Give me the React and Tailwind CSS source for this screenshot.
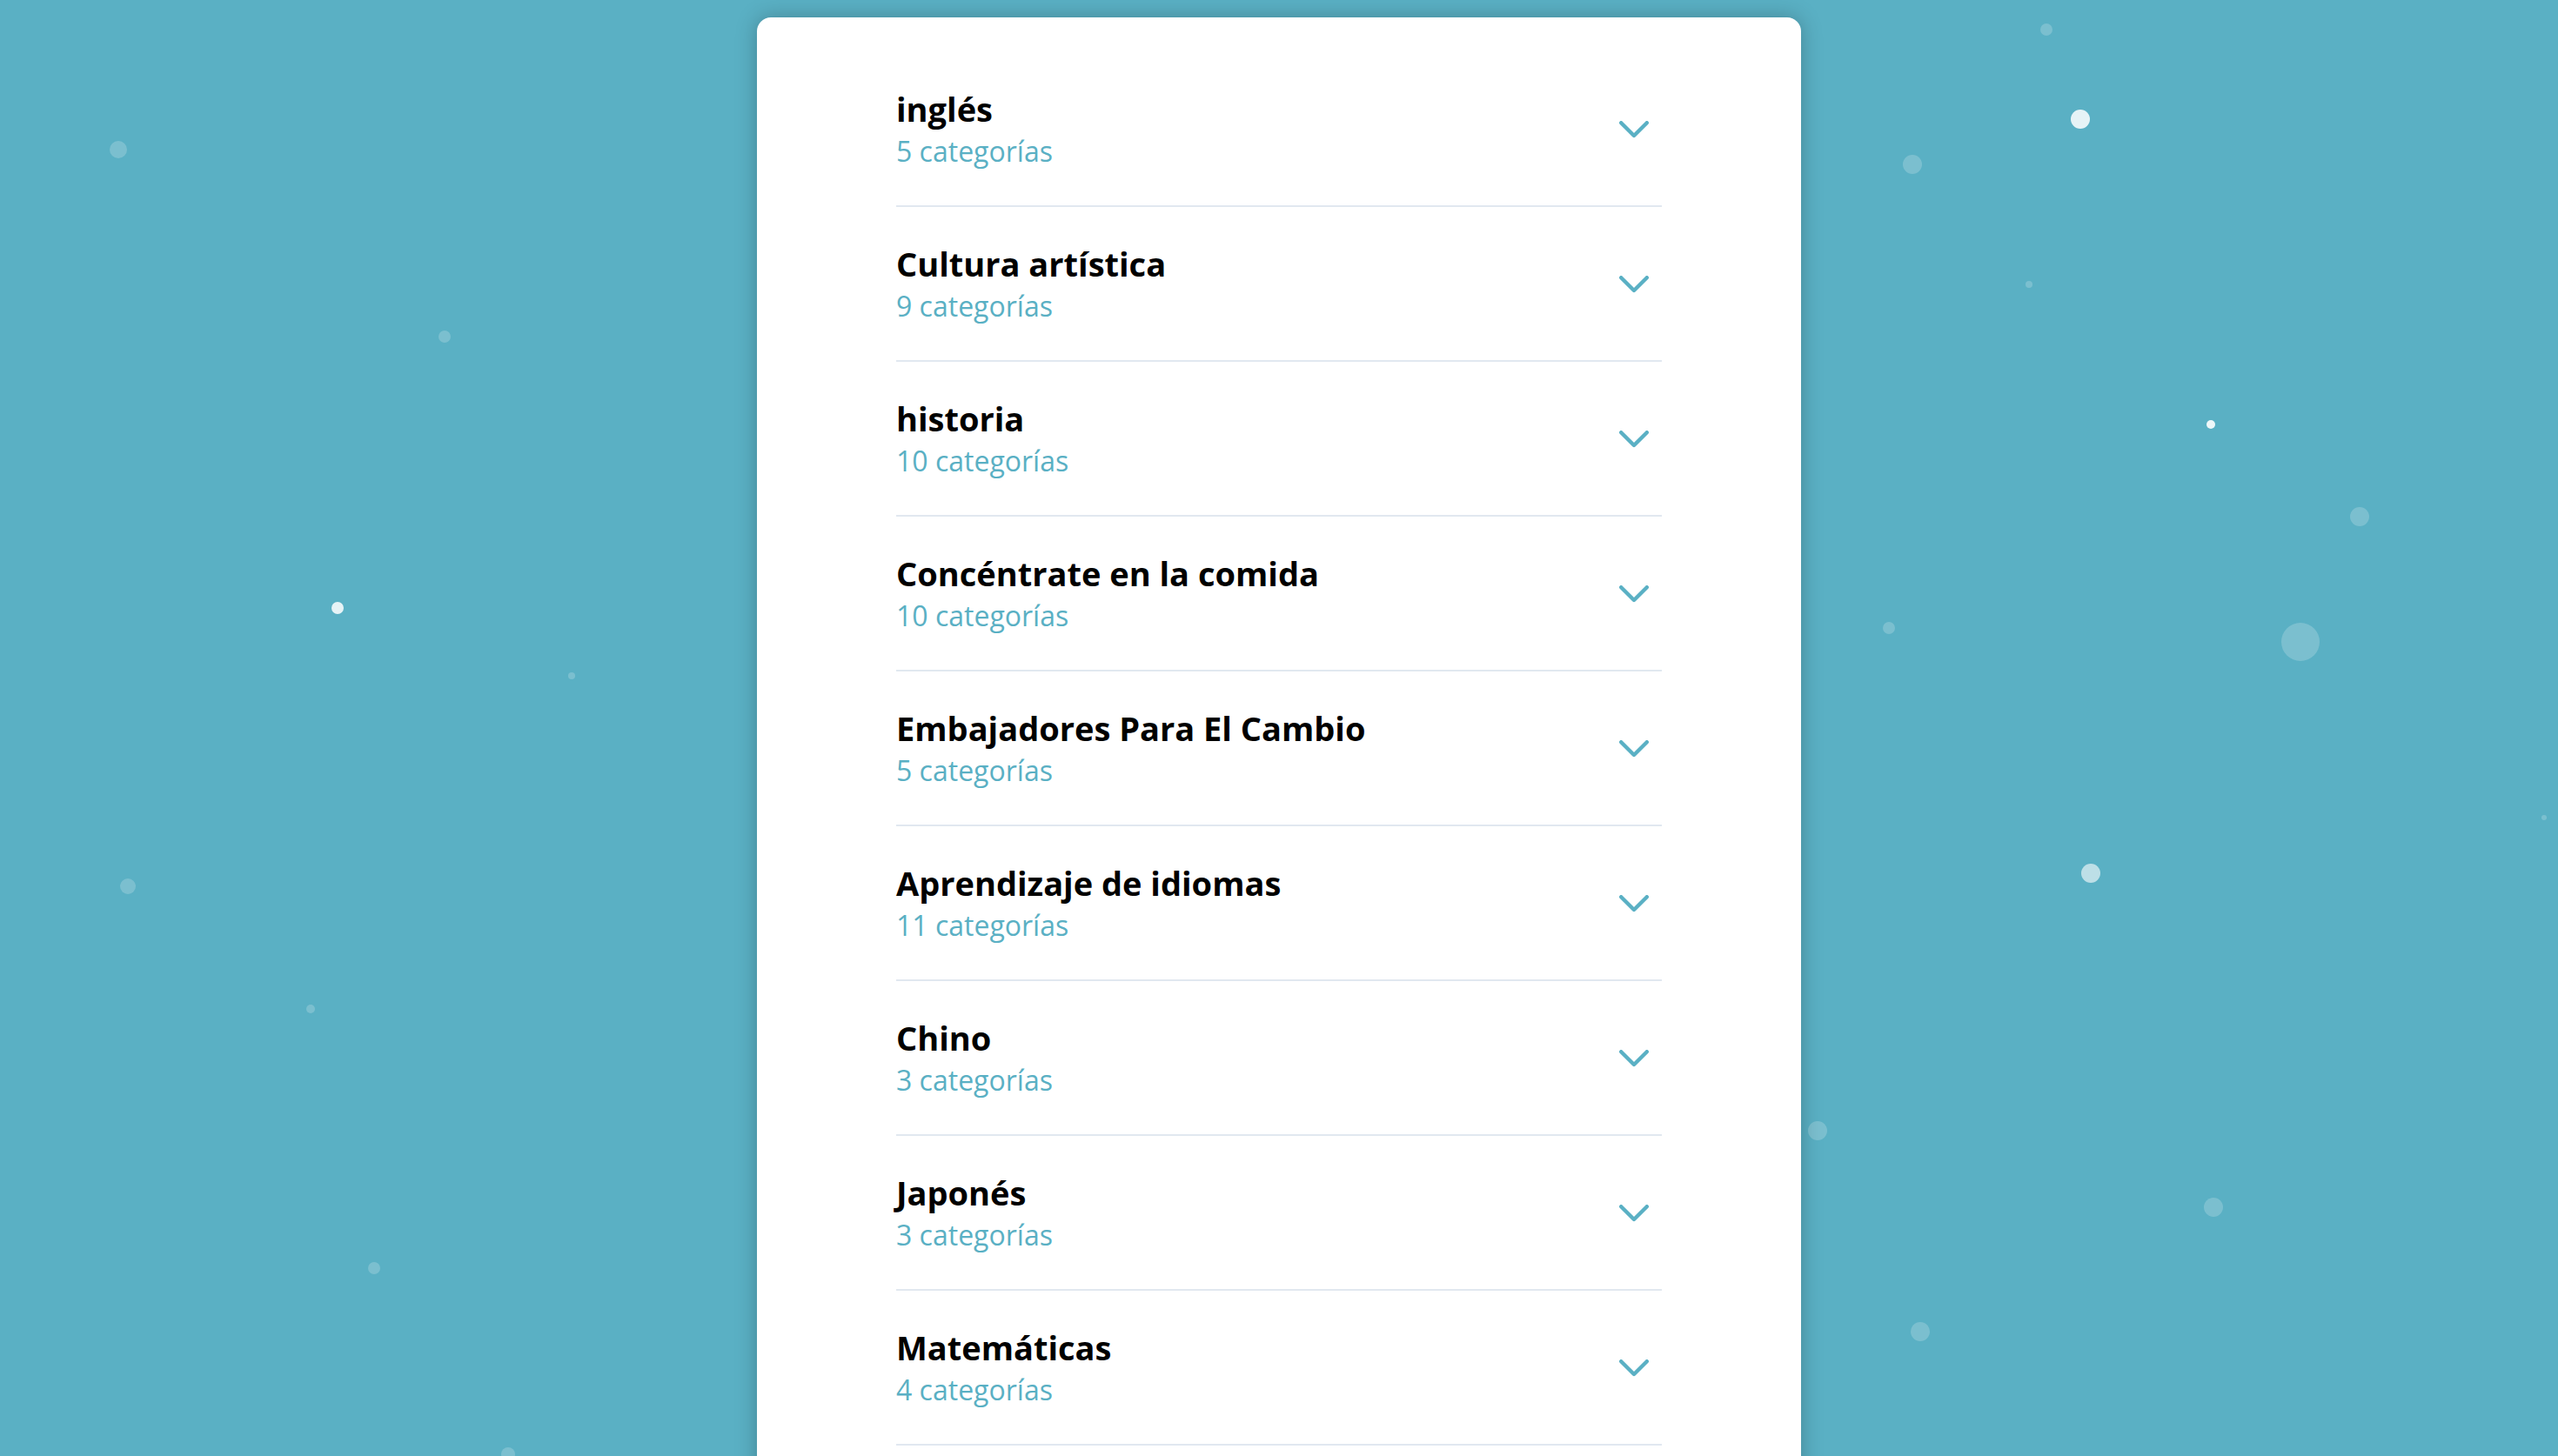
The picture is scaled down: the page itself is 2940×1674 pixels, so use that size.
const subjects = [
  { name: 'inglés', count: '5 categorías' },
  { name: 'Cultura artística', count: '9 categorías' },
  { name: 'historia', count: '10 categorías' },
  { name: 'Concéntrate en la comida', count: '10 categorías' },
  { name: 'Embajadores Para El Cambio', count: '5 categorías' },
  { name: 'Aprendizaje de idiomas', count: '11 categorías' },
  { name: 'Chino', count: '3 categorías' },
  { name: 'Japonés', count: '3 categorías' },
  { name: 'Matemáticas', count: '4 categorías' },
];

// floating bubbles behind the card
const bubbles = [
  'left-[126px] top-[162px] w-[20px] h-[20px] bg-white/20',
  'left-[504px] top-[380px] w-[14px] h-[14px] bg-white/20',
  'left-[381px] top-[692px] w-[14px] h-[14px] bg-white/85',
  'left-[653px] top-[773px] w-[8px] h-[8px] bg-white/20',
  'left-[138px] top-[1010px] w-[18px] h-[18px] bg-white/20',
  'left-[352px] top-[1155px] w-[10px] h-[10px] bg-white/20',
  'left-[423px] top-[1451px] w-[14px] h-[14px] bg-white/20',
  'left-[576px] top-[1664px] w-[16px] h-[16px] bg-white/20',
  'left-[2345px] top-[27px] w-[14px] h-[14px] bg-white/20',
  'left-[2380px] top-[126px] w-[22px] h-[22px] bg-white/85',
  'left-[2187px] top-[178px] w-[22px] h-[22px] bg-white/20',
  'left-[2328px] top-[323px] w-[8px] h-[8px] bg-white/20',
  'left-[2536px] top-[483px] w-[10px] h-[10px] bg-white/90',
  'left-[2701px] top-[583px] w-[22px] h-[22px] bg-white/20',
  'left-[2164px] top-[715px] w-[14px] h-[14px] bg-white/20',
  'left-[2622px] top-[716px] w-[44px] h-[44px] bg-white/20',
  'left-[2392px] top-[993px] w-[22px] h-[22px] bg-white/60',
  'left-[2921px] top-[937px] w-[6px] h-[6px] bg-white/20',
  'left-[2078px] top-[1289px] w-[22px] h-[22px] bg-white/20',
  'left-[2533px] top-[1377px] w-[22px] h-[22px] bg-white/20',
  'left-[2196px] top-[1520px] w-[22px] h-[22px] bg-white/20',
];

const Chevron = () => (
  <svg width="34" height="20" viewBox="0 0 34 20" fill="none">
    <polyline points="2.2,2.2 17,17 31.8,2.2" stroke="#5ab0c4" strokeWidth="4.4" strokeLinecap="round" strokeLinejoin="round" />
  </svg>
);

const App = () => {
  return (
    <div className="relative h-screen overflow-hidden bg-[#5ab0c4]" style={{ fontFamily: '"Open Sans", "Noto Sans", sans-serif' }}>
      {bubbles.map((b, i) => (
        <div key={i} className={`absolute rounded-full ${b}`} />
      ))}

      <div className="relative mx-auto mt-[20px] min-h-[1800px] w-[1200px] rounded-2xl bg-white px-[160px] pt-[40px] shadow-[0_0_24px_rgba(0,0,0,0.25)]">
        {subjects.map((s) => (
          <div key={s.name} className="flex items-center justify-between border-b-2 border-[#e1e8f0] pt-[40px] pb-[38px]">
            <div>
              <p className="text-[38px] leading-[50px] font-bold text-black">{s.name}</p>
              <p className="text-[32px] leading-[48px] text-[#5ab0c4]">{s.count}</p>
            </div>
            <div className="flex h-16 w-16 items-center justify-center">
              <Chevron />
            </div>
          </div>
        ))}
      </div>
    </div>
  );
};

export default App;
